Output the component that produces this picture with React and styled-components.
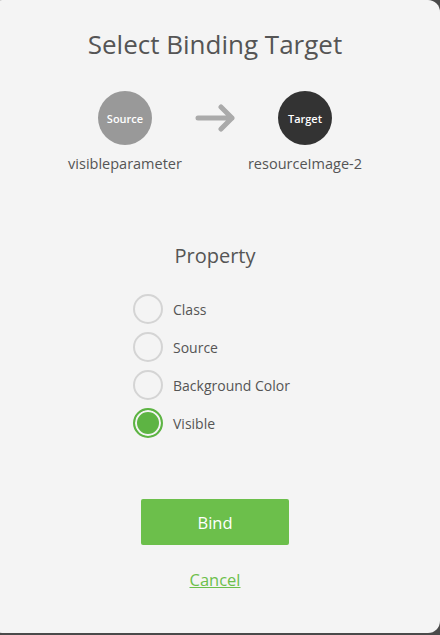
import React, { useState } from 'react'
import styled, { createGlobalStyle } from 'styled-components'

const GlobalStyle = createGlobalStyle`
  html, body {
    margin: 0;
    padding: 0;
    background: #4a4a4a;
    font-family: "Open Sans", "Noto Sans", sans-serif;
    overflow: hidden;
  }
`

const Dialog = styled.div`
  width: 450px;
  height: 633px;
  margin-left: -10px;
  background: #f4f4f4;
  border-radius: 12px;
  display: flex;
  flex-direction: column;
  align-items: center;
  box-sizing: border-box;
  padding-top: 27px;
  color: #555;
`

const Title = styled.h1`
  margin: 0;
  font-size: 26px;
  font-weight: 400;
  line-height: 34px;
  color: #555;
`

const Flow = styled.div`
  display: flex;
  align-items: flex-start;
  margin-top: 30px;
`

const Node = styled.div`
  display: flex;
  flex-direction: column;
  align-items: center;
  width: 116px;
`

const Dot = styled.div`
  width: 54px;
  height: 54px;
  border-radius: 50%;
  background: ${p => p.$dark ? '#333' : '#999'};
  color: #fff;
  display: flex;
  align-items: center;
  justify-content: center;
  font-size: 11px;
  font-weight: 600;
`

const NodeLabel = styled.div`
  margin-top: 9px;
  font-size: 14.5px;
  white-space: nowrap;
  color: #555;
`

const Arrow = styled.svg`
  margin: 13px 10px 0 12px;
`

const Subtitle = styled.h2`
  margin: 69px 0 0;
  font-size: 20px;
  font-weight: 400;
  line-height: 28px;
  color: #555;
`

const Options = styled.div`
  display: flex;
  flex-direction: column;
  gap: 8px;
  margin-top: 24px;
  margin-left: 6px;
  align-self: center;
  width: 170px;
`

const Option = styled.label`
  display: flex;
  align-items: center;
  gap: 10px;
  font-size: 14px;
  color: #555;
  cursor: pointer;
`

const Ring = styled.span`
  width: 30px;
  height: 30px;
  box-sizing: border-box;
  border-radius: 50%;
  border: 2px solid ${p => p.$on ? '#5db443' : '#d4d4d4'};
  background: ${p => p.$on ? '#5db443' : 'transparent'};
  box-shadow: ${p => p.$on ? 'inset 0 0 0 2px #f4f4f4' : 'none'};
  flex-shrink: 0;
`

const BindButton = styled.button`
  margin-top: 61px;
  width: 148px;
  height: 46px;
  border: none;
  border-radius: 2px;
  background: #6cbf4b;
  color: #fff;
  font-family: inherit;
  font-size: 16.5px;
  cursor: pointer;
`

const CancelLink = styled.a`
  margin-top: 23px;
  color: #6cbf4b;
  font-size: 16.5px;
  text-decoration: underline;
  cursor: pointer;
`

const props = ['Class', 'Source', 'Background Color', 'Visible']

export default function App() {
  const [selected, setSelected] = useState('Visible')
  return (
    <>
      <GlobalStyle />
      <Dialog>
        <Title>Select Binding Target</Title>
        <Flow>
          <Node>
            <Dot>Source</Dot>
            <NodeLabel>visibleparameter</NodeLabel>
          </Node>
          <Arrow width="42" height="28" viewBox="0 0 42 28">
            <path d="M3 14 H37 M26 3 L37 14 L26 25" fill="none" stroke="#aaa" strokeWidth="5" strokeLinecap="round" strokeLinejoin="round" />
          </Arrow>
          <Node>
            <Dot $dark>Target</Dot>
            <NodeLabel>resourceImage-2</NodeLabel>
          </Node>
        </Flow>
        <Subtitle>Property</Subtitle>
        <Options>
          {props.map(p => (
            <Option key={p} onClick={() => setSelected(p)}>
              <Ring $on={selected === p} />
              {p}
            </Option>
          ))}
        </Options>
        <BindButton>Bind</BindButton>
        <CancelLink>Cancel</CancelLink>
      </Dialog>
    </>
  )
}
